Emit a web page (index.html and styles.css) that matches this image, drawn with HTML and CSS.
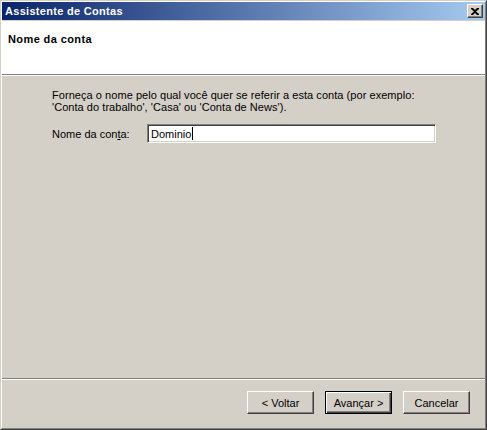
FILE: index.html
```html
<!DOCTYPE html>
<html lang="pt">
<head>
<meta charset="utf-8">
<title>Assistente de Contas</title>
<link rel="stylesheet" href="styles.css">
</head>
<body>
<div class="window">
  <div class="frame">
    <div class="titlebar">
      <span class="title">Assistente de Contas</span>
      <span class="close"><svg width="8" height="7" viewBox="0 0 8 7"><path d="M0 0h2l2 2 2-2h2v1L5 3.5 8 6v1H6L4 5 2 7H0V6l3-2.5L0 1z" fill="#000"/></svg></span>
    </div>
    <div class="header">
      <div class="heading">Nome da conta</div>
    </div>
    <div class="sep"></div>
    <div class="content">
      <p class="desc">Forneça o nome pelo qual você quer se referir a esta conta (por exemplo:<br>'Conta do trabalho', 'Casa' ou 'Conta de News').</p>
      <div class="field">
        <label class="label" for="nome">Nome da con<u>t</u>a:</label>
        <div class="input"><span class="value">Dominio</span><span class="caret"></span></div>
      </div>
    </div>
    <div class="sep"></div>
    <div class="buttons">
      <div class="btn">&lt; Voltar</div>
      <div class="btn default">Avançar &gt;</div>
      <div class="btn">Cancelar</div>
    </div>
  </div>
</div>
</body>
</html>
```
FILE: styles.css
```css
html, body {
  margin: 0;
  padding: 0;
  width: 487px;
  height: 430px;
  overflow: hidden;
  background: #d4d0c8;
}
.window {
  width: 487px;
  height: 430px;
  box-sizing: border-box;
  border-top: 1px solid #d4d0c8;
  border-left: 1px solid #d4d0c8;
  border-right: 1px solid #404040;
  border-bottom: 1px solid #404040;
  font-family: "Liberation Sans", Arial, sans-serif;
  font-size: 11px;
  color: #000;
}
.frame {
  height: 100%;
  box-sizing: border-box;
  border-top: 1px solid #fff;
  border-left: 1px solid #fff;
  border-right: 1px solid #808080;
  border-bottom: 1px solid #808080;
  display: flex;
  flex-direction: column;
}
.titlebar {
  height: 18px;
  margin: 0 0 1px 0;
  background: linear-gradient(to right, #0a246a, #a6caf0);
  display: flex;
  align-items: center;
  justify-content: space-between;
  padding: 0 2px 0 3px;
}
.title {
  color: #fff;
  font-weight: bold;
  font-size: 11px;
  letter-spacing: 0.3px;
}
.close {
  width: 16px;
  height: 14px;
  box-sizing: border-box;
  background: #d4d0c8;
  border-top: 1px solid #fff;
  border-left: 1px solid #fff;
  border-right: 1px solid #404040;
  border-bottom: 1px solid #404040;
  box-shadow: inset -1px -1px 0 #808080;
  display: flex;
  align-items: center;
  justify-content: center;
}
.header {
  background: #fff;
  height: 53px;
  box-sizing: border-box;
  padding: 12px 0 0 6px;
}
.heading {
  font-weight: bold;
  font-size: 11px;
  letter-spacing: 0.4px;
}
.sep {
  height: 1px;
  background: #808080;
  border-bottom: 1px solid #fff;
}
.content {
  flex: 1;
  padding: 13px 0 0 50px;
}
.desc {
  margin: 0;
  line-height: 12px;
  letter-spacing: 0.05px;
}
.field {
  display: flex;
  align-items: center;
  margin-top: 11px;
}
.label {
  width: 95px;
}
.label u {
  text-decoration: underline;
}
.input {
  width: 289px;
  height: 19px;
  box-sizing: border-box;
  background: #fff;
  border-top: 1px solid #808080;
  border-left: 1px solid #808080;
  border-right: 1px solid #fff;
  border-bottom: 1px solid #fff;
  box-shadow: inset 1px 1px 0 #404040, inset -1px -1px 0 #d4d0c8;
  display: flex;
  align-items: center;
  padding-left: 3px;
}
.caret {
  width: 1px;
  height: 13px;
  background: #000;
  margin-left: 1px;
}
.buttons {
  height: 48px;
  box-sizing: border-box;
  display: flex;
  justify-content: flex-end;
  align-items: flex-start;
  padding: 11px 15px 0 0;
  gap: 11px;
}
.btn {
  width: 67px;
  height: 23px;
  box-sizing: border-box;
  background: #d4d0c8;
  border-top: 1px solid #fff;
  border-left: 1px solid #fff;
  border-right: 1px solid #404040;
  border-bottom: 1px solid #404040;
  box-shadow: inset -1px -1px 0 #808080;
  display: flex;
  align-items: center;
  justify-content: center;
}
.btn.default {
  border: 1px solid #000;
  box-shadow: inset 1px 1px 0 #fff, inset -1px -1px 0 #404040, inset -2px -2px 0 #808080;
}
```
